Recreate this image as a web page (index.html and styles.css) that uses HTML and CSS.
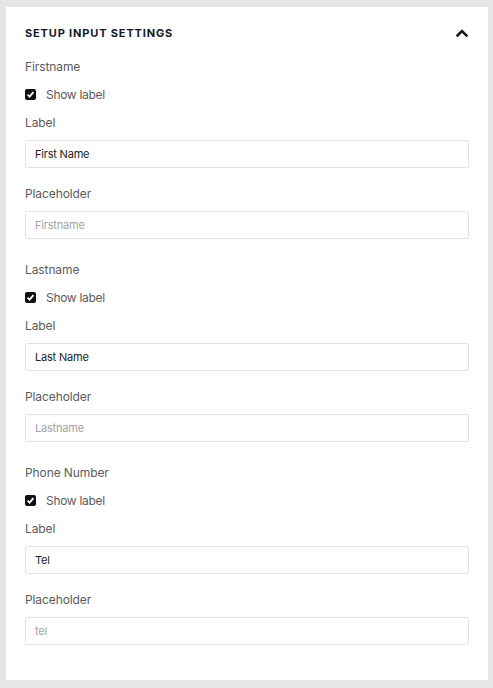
FILE: index.html
```html
<!DOCTYPE html>
<html>
<head>
<meta charset="utf-8">
<link rel="stylesheet" href="styles.css">
</head>
<body>
<div class="panel">
  <div class="header">
    <div class="title">SETUP INPUT SETTINGS</div>
    <svg class="chev" width="12" height="8" viewBox="0 0 12 8"><polyline points="1.5,6.5 6,2 10.5,6.5" fill="none" stroke="#111827" stroke-width="2.6" stroke-linecap="square"/></svg>
  </div>

  <div class="section">
    <div class="name">Firstname</div>
    <label class="show"><span class="box"><svg width="11" height="11" viewBox="0 0 11 11"><rect x="0" y="0" width="11" height="11" rx="2" fill="#111"/><polyline points="2.6,5.6 4.6,7.6 8.4,3.2" fill="none" stroke="#fff" stroke-width="1.8"/></svg></span>Show label</label>
    <div class="lbl">Label</div>
    <input class="inp" type="text" value="First Name">
    <div class="lbl lbl2">Placeholder</div>
    <input class="inp" type="text" placeholder="Firstname">
  </div>

  <div class="section">
    <div class="name">Lastname</div>
    <label class="show"><span class="box"><svg width="11" height="11" viewBox="0 0 11 11"><rect x="0" y="0" width="11" height="11" rx="2" fill="#111"/><polyline points="2.6,5.6 4.6,7.6 8.4,3.2" fill="none" stroke="#fff" stroke-width="1.8"/></svg></span>Show label</label>
    <div class="lbl">Label</div>
    <input class="inp" type="text" value="Last Name">
    <div class="lbl lbl2">Placeholder</div>
    <input class="inp" type="text" placeholder="Lastname">
  </div>

  <div class="section">
    <div class="name">Phone Number</div>
    <label class="show"><span class="box"><svg width="11" height="11" viewBox="0 0 11 11"><rect x="0" y="0" width="11" height="11" rx="2" fill="#111"/><polyline points="2.6,5.6 4.6,7.6 8.4,3.2" fill="none" stroke="#fff" stroke-width="1.8"/></svg></span>Show label</label>
    <div class="lbl">Label</div>
    <input class="inp" type="text" value="Tel">
    <div class="lbl lbl2">Placeholder</div>
    <input class="inp" type="text" placeholder="tel">
  </div>
</div>
</body>
</html>
```

FILE: styles.css
```css
html, body {
  margin: 0;
  padding: 0;
  background: #e6e6e6;
}
body {
  font-family: Inter, "Liberation Sans", sans-serif;
  padding: 7px 5px 8px 6px;
}
.panel {
  background: #fff;
  padding: 19px 19px 35px 19px;
}
.header {
  display: flex;
  align-items: center;
  justify-content: space-between;
  height: 14px;
  margin-bottom: 16px;
}
.title {
  font-size: 11px;
  font-weight: 700;
  letter-spacing: 0.85px;
  color: #111827;
  line-height: 14px;
}
.chev {
  display: block;
  margin-right: 1px;
}
.section {
  display: flex;
  flex-direction: column;
}
.section + .section {
  margin-top: 20px;
}
.name, .lbl, .show {
  font-size: 12px;
  line-height: 18px;
  padding-top: 2px;
  color: #5b5b5b;
  letter-spacing: -0.1px;
}
.show {
  display: flex;
  align-items: center;
  margin-top: 8px;
  letter-spacing: -0.3px;
}
.box {
  display: block;
  width: 11px;
  height: 11px;
  margin-right: 10px;
  margin-top: -1px;
}
.box svg { display: block; }
.lbl {
  margin-top: 8px;
}
.lbl2 {
  margin-top: 15px;
}
.inp {
  margin: 8px 0 0 0;
  height: 28px;
  box-sizing: border-box;
  border: 1px solid #e3e3e3;
  border-radius: 2px;
  padding: 0 9px;
  font-family: Inter, "Liberation Sans", sans-serif;
  font-size: 11px;
  letter-spacing: -0.2px;
  color: #222;
  outline: none;
  width: 100%;
}
.inp::placeholder {
  color: #a3a3a3;
}
```
